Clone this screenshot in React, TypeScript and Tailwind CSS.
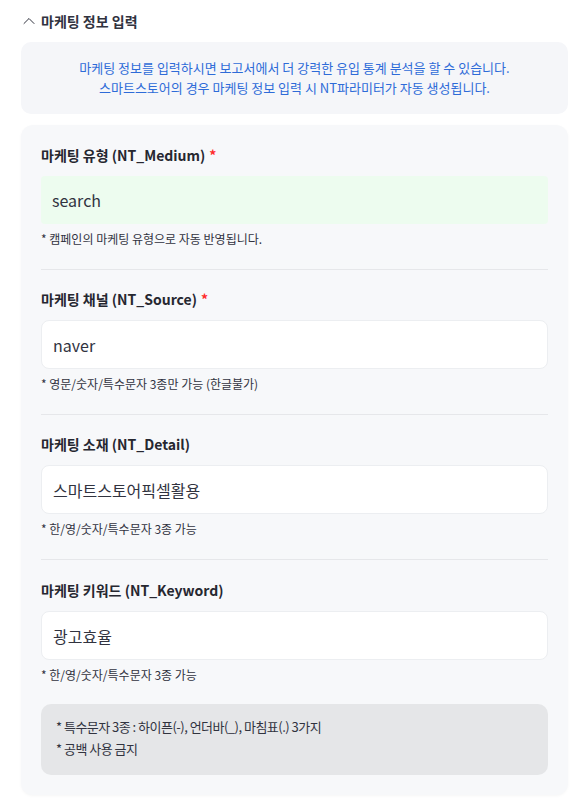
const font = { fontFamily: '"Noto Sans CJK KR", "Noto Sans", sans-serif' };

type Field = {
  label: string;
  required?: boolean;
  value: string;
  hint: string;
  readOnly?: boolean;
};

const fields: Field[] = [
  { label: "마케팅 유형 (NT_Medium)", required: true, value: "search", hint: "* 캠페인의 마케팅 유형으로 자동 반영됩니다.", readOnly: true },
  { label: "마케팅 채널 (NT_Source)", required: true, value: "naver", hint: "* 영문/숫자/특수문자 3종만 가능 (한글불가)" },
  { label: "마케팅 소재 (NT_Detail)", value: "스마트스토어픽셀활용", hint: "* 한/영/숫자/특수문자 3종 가능" },
  { label: "마케팅 키워드 (NT_Keyword)", value: "광고효율", hint: "* 한/영/숫자/특수문자 3종 가능" },
];

function FieldBlock({ field, last }: { field: Field; last: boolean }) {
  return (
    <div className={last ? "pt-[19px]" : "pt-[18px] pb-[21px] border-b border-[#e6e7ea]"}>
      <div className="text-[14px] font-bold text-[#262730] leading-[22px] h-[22px]">
        {field.label}
        {field.required && <span className="text-[#ff2b2b] ml-1">*</span>}
      </div>
      <div
        className={
          field.readOnly
            ? "mt-[10px] h-[48px] flex items-center px-[11px] text-[16px] text-[#31333f] bg-[#edfcef] rounded-[4px]"
            : "mt-[10px] h-[49px] flex items-center px-[11px] text-[16px] text-[#31333f] bg-white border border-[#eceef1] rounded-[8px]"
        }
      >
        {field.value}
      </div>
      <div className="mt-[6px] text-[12px] text-[#31333f] leading-[18px]">{field.hint}</div>
    </div>
  );
}

export default function App() {
  return (
    <div style={font} className="w-[586px] h-[805px] bg-white px-[21px] pt-[10px] overflow-hidden">
      <div className="flex items-center gap-[6px] h-[22px] pl-[1px]">
        <svg width="12" height="12" viewBox="0 0 12 12" fill="none" className="ml-[1px]">
          <path d="M1 8.5 L6 3.5 L11 8.5" stroke="#31333f" strokeWidth="1" strokeLinecap="round" strokeLinejoin="round" />
        </svg>
        <span className="text-[14px] font-bold text-[#31333f]">마케팅 정보 입력</span>
      </div>

      <div className="mt-[10px] w-[547px] h-[72px] rounded-[10px] bg-[#f5f6f9] flex flex-col items-center justify-center text-[13px] leading-[20px] text-[#2e6bd8]">
        <div>마케팅 정보를 입력하시면 보고서에서 더 강력한 유입 통계 분석을 할 수 있습니다.</div>
        <div>스마트스토어의 경우 마케팅 정보 입력 시 NT파라미터가 자동 생성됩니다.</div>
      </div>

      <div className="mt-[11px] w-[547px] h-[670px] rounded-[12px] bg-[#f7f8fa] shadow-[0_1px_3px_rgba(0,0,0,0.04)] px-[20px] pt-[1px]">
        {fields.map((f, i) => (
          <FieldBlock key={f.label} field={f} last={i === fields.length - 1} />
        ))}
        <div className="mt-[20px] h-[71px] rounded-[10px] bg-[#e5e6e8] px-[15px] pt-[12px] text-[13px] leading-[22px] text-[#31333f] tracking-[-0.04em]">
          <div>* 특수문자 3종 : 하이픈(-), 언더바(_), 마침표(.) 3가지</div>
          <div>* 공백 사용 금지</div>
        </div>
      </div>
    </div>
  );
}
